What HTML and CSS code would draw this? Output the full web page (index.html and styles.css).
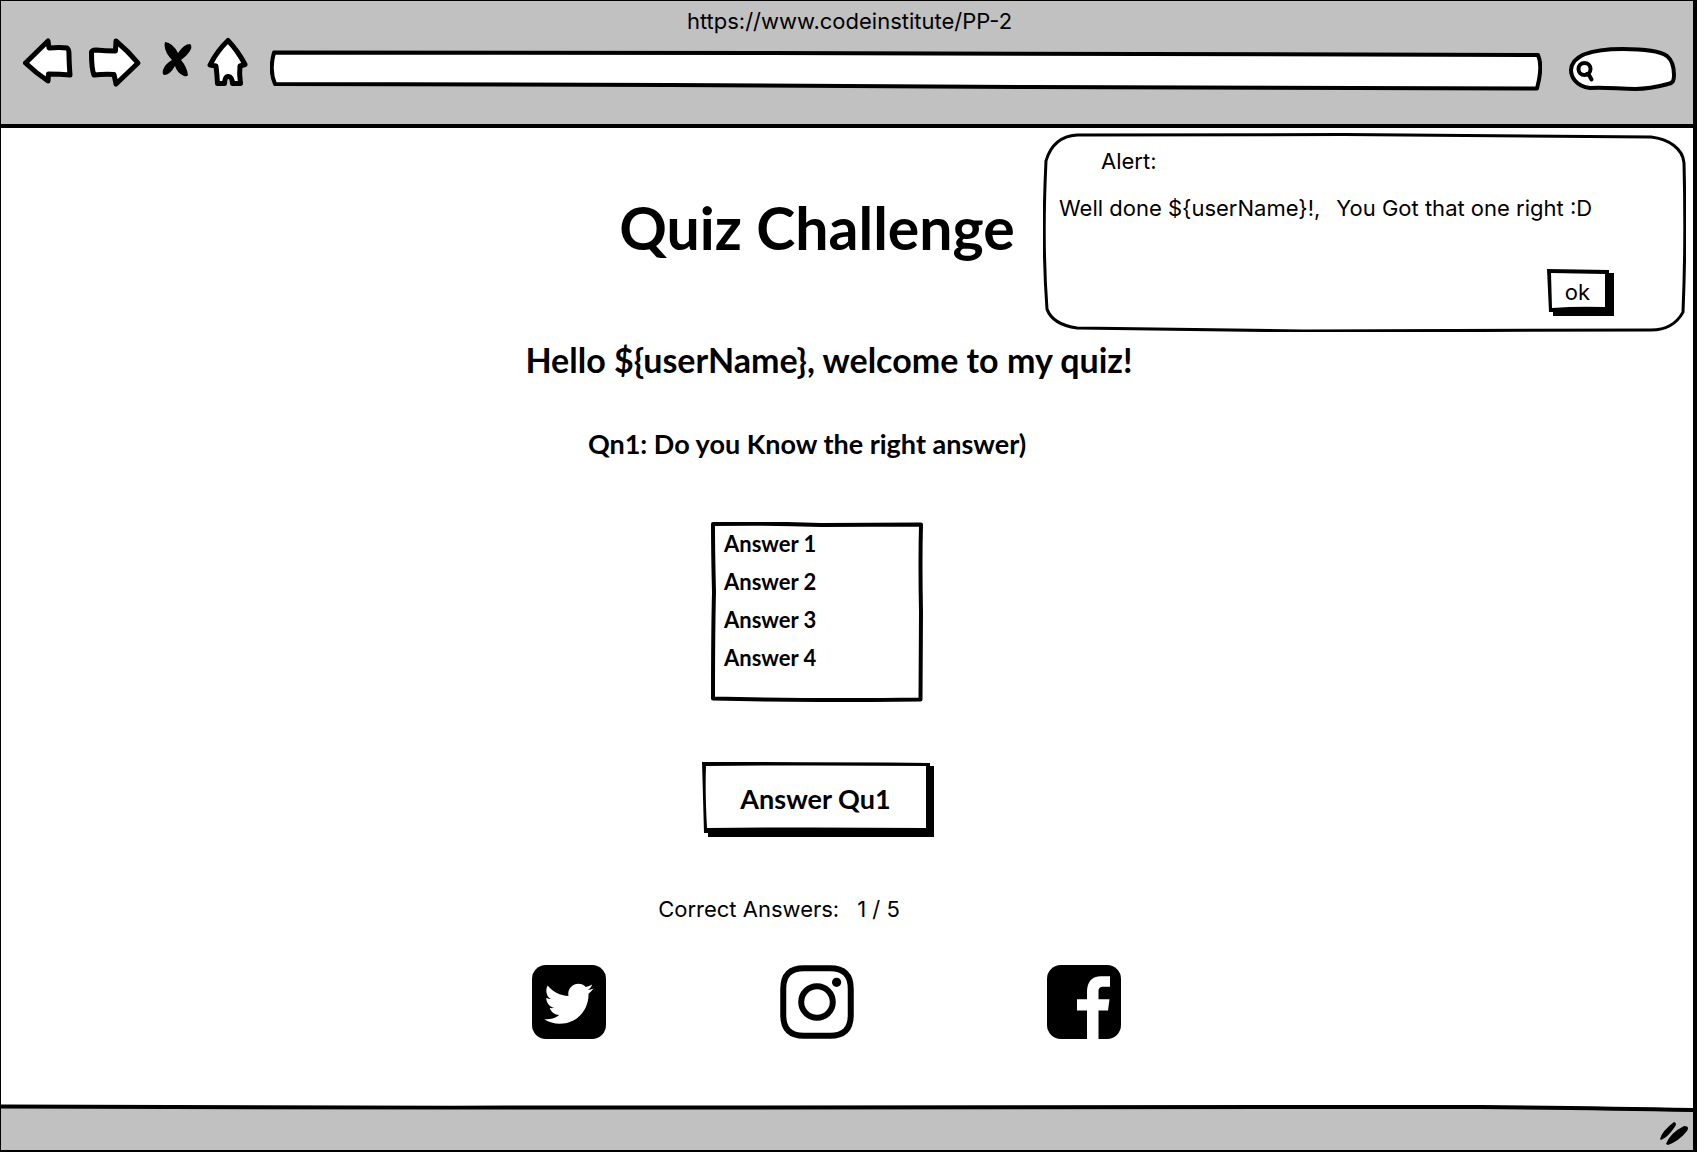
FILE: index.html
```
<!DOCTYPE html>
<html lang="en">
<head>
<meta charset="utf-8">
<meta name="viewport" content="width=device-width, initial-scale=1">
<title>Quiz Challenge</title>
<link rel="stylesheet" href="styles.css">
</head>
<body>
<div class="window">
  <header class="toolbar">
    <p class="address-title">https://www.codeinstitute/PP-2</p>
    <div class="tools">
      <button class="tool" type="button" aria-label="Back">
        <svg class="ink" width="53" height="56" viewBox="23 36 53 56"><path d="M25.500 63L48 41L49 48Q60 47 67 48Q69 49 69 54Q69 62 70 75Q60 74 48.500 74L48 81Q36 73 25.500 63Z"/></svg>
      </button>
      <button class="tool" type="button" aria-label="Forward">
        <svg class="ink" width="56" height="56" viewBox="88 36 56 56"><path d="M91.500 53Q91 50 96 50Q105 51 115.500 51L116 41Q128 51 138 63L116 84L114 74.500Q104 74 94 75Q91.500 69 91.500 53Z"/></svg>
      </button>
      <button class="tool" type="button" aria-label="Stop">
        <svg width="38" height="56" viewBox="156 36 38 56"><path d="M165 42Q173 43 178 53Q184 44 190 44Q192 45 191 49Q188 55 181 60Q187 67 188 75Q187 77 184 76Q177 73 175 66Q170 75 164 75Q162 74 163 70Q165 64 172 60Q165 53 164.500 45Z"/></svg>
      </button>
      <button class="tool" type="button" aria-label="Home">
        <svg class="ink" width="44" height="56" viewBox="206 36 44 56"><path d="M228 40.500Q238 51 245 64.500L240 66Q239 74 240.500 83.500H232.500Q232 76 228 76.500Q225 76 224.500 83.500H217.500Q217 74 216 66L210 65Q217 51 228 40.500Z"/></svg>
      </button>
      <div class="url">
        <svg class="ink outline" viewBox="0 0 1272 42" preserveAspectRatio="none"><path d="M4 2.500L500 3L1268 5Q1273 16 1267 38.500L760 37L400 35L5 34Q-1 20 4 2.500Z"/></svg>
        <input class="field" type="text" aria-label="Address">
      </div>
      <div class="search">
        <svg class="ink outline" viewBox="0 0 107 44"><path d="M21 41C6 39 2 29 2 23C3 7 26 2 54 2C76 2 92 5 98 9C104 14 105 22 105 28C105 34 104 36 99 37C88 40 78 42 66 42C50 42 37 40 21 41Z"/><circle cx="15.500" cy="22" r="6"/><path d="M18 27L20 28L22.500 32.500"/></svg>
        <input class="field" type="search" aria-label="Search">
      </div>
    </div>
  </header>

  <main class="page">
    <h1 class="title">Quiz Challenge</h1>
    <h2 class="greeting">Hello ${userName}, welcome to my quiz!</h2>
    <form class="quiz">
      <label class="question" for="answers">Qn1: Do you Know the right answer)</label>
      <div class="answers">
        <svg class="ink outline" viewBox="0 0 212 180" preserveAspectRatio="none"><path d="M2 2Q60 1 110 3L210 2.500Q209 40 210 90L209.500 177.500Q110 179 2 176.500Q2 110 3 70Q2 30 2 2Z"/></svg>
        <select class="answer-list" id="answers" size="4">
          <option>Answer 1</option>
          <option>Answer 2</option>
          <option>Answer 3</option>
          <option>Answer 4</option>
        </select>
      </div>
      <button class="sketch-button submit" type="button">
        <svg class="outline" viewBox="0 0 232 76"><path d="M5 8H232V75H6V71H2L0 0Q110 0 228 1V4H232V20H5Z"/><path class="paper" d="M4 4Q110 3 224 4V66Q110 65 5 66Q3 30 4 4Z"/></svg>
        <span class="caption">Answer Qu1</span>
      </button>
    </form>
    <p class="score"><span>Correct Answers:</span><span>1 / 5</span></p>
    <nav class="social" aria-label="Social">
      <a href="#twitter" aria-label="Twitter"><svg width="74" height="74" viewBox="0 0 74 74"><rect width="74" height="74" rx="14"/><path class="paper" transform="translate(2.400 -.7) scale(.154)" d="M351.100 190.800c.2 2.800.2 5.700.2 8.500 0 86.700-66 186.600-186.600 186.600-37.200 0-71.700-10.800-100.700-29.400 5.300.6 10.400.8 15.800.8 30.700 0 58.900-10.400 81.400-28-28.800-.6-53-19.500-61.300-45.500 10.100 1.500 19.200 1.500 29.600-1.200-30-6.100-52.500-32.500-52.500-64.400v-.8c8.700 4.900 18.900 7.900 29.600 8.300a65.400 65.400 0 0 1-29.200-54.600c0-12.200 3.200-23.400 8.900-33.100 32.300 39.800 80.800 65.800 135.200 68.600-9.300-44.500 24-80.600 64-80.600 18.900 0 35.900 7.900 47.900 20.700 14.800-2.800 29-8.300 41.600-15.800-4.900 15.200-15.200 28-28.800 36.100 13.200-1.400 26-5.100 37.800-10.200-8.900 13.100-20.100 24.700-32.900 34z"/></svg></a>
      <a href="#instagram" aria-label="Instagram"><svg width="74" height="74" viewBox="0 0 74 74"><path class="ring" d="M24 3.250H50C64 3.250 70.750 10 70.750 24V50C70.750 64 64 70.750 50 70.750H24C10 70.750 3.250 64 3.250 50V24C3.250 10 10 3.250 24 3.250Z"/><circle class="ring" cx="37" cy="37" r="15.800"/><circle cx="56.600" cy="17.300" r="4.600"/></svg></a>
      <a href="#facebook" aria-label="Facebook"><svg width="74" height="74" viewBox="0 0 74 74"><rect width="74" height="74" rx="14"/><path class="paper" d="M40 74V45.600H30V34.300H40V27C40 17 45 11.300 54 11.300H63V21.800H57C53 21.800 51.500 23 51.500 26.500V34.300H62.500L61 45.600H51.500V74Z"/></svg></a>
    </nav>

    <section class="alert" role="alertdialog" aria-labelledby="alert-title">
      <svg class="outline alert-frame" viewBox="0 0 643 200" preserveAspectRatio="none"><path d="M34 2L300 1.500L608 4C626 6 640 16 641 30Q643 110 640 180C634 191 624 198 608 198L260 199L34 196C20 194 8 188 4 177Q-1 110 3 28C8 11 18 3 34 2Z"/></svg>
      <h2 class="alert-title" id="alert-title">Alert:</h2>
      <p class="alert-text"><span>Well done ${userName}!,</span><span>You Got that one right :D</span></p>
      <button class="sketch-button ok" type="button">
        <svg class="outline" viewBox="0 0 67 48"><path d="M0 0L62 1V4H67V47H6V43H2Z"/><path class="paper" d="M4 4L58 5V38Q30 37 5 39Z"/></svg>
        <span class="caption">ok</span>
      </button>
    </section>
  </main>

  <footer class="statusbar">
    <svg class="edge" viewBox="0 0 1692 8" preserveAspectRatio="none"><path class="paper" d="M0 0H1692V6L1480 3H0Z"/><path class="rule" d="M0 2.500Q300 4 600 3.500T1480 3Q1600 4 1692 6"/></svg>
    <svg class="grip" width="28" height="24" viewBox="1660 1122 28 24"><path d="M1660 1139Q1662 1131 1674 1122Q1678 1123 1674 1128Q1668 1137 1661 1140ZM1666 1144Q1670 1133 1684 1126Q1690 1126 1687 1131Q1679 1141 1668 1145Z"/></svg>
  </footer>
</div>
</body>
</html>
```
FILE: styles.css
```
* {
  box-sizing: border-box;
}

body {
  margin: 0;
  background: #fff;
  color: #000;
  font-family: Inter, sans-serif;
  font-size: 22px;
  line-height: 28px;
}

h1, h2, p {
  margin: 0;
}

svg {
  display: block;
}

button {
  border: 0;
  padding: 0;
  background: none;
  color: inherit;
  font: inherit;
  cursor: pointer;
}

.window {
  display: flex;
  flex-direction: column;
  min-height: 100vh;
  margin-right: 5px;
  border: solid #000;
  border-width: 1px 4px 2px 1px;
}

/* Hand-drawn outlines */
.ink {
  fill: #fff;
  stroke: #000;
  stroke-width: 5px;
  stroke-linejoin: round;
  stroke-linecap: round;
}

.outline {
  position: absolute;
  inset: 0;
  width: 100%;
  height: 100%;
}

.outline path {
  vector-effect: non-scaling-stroke;
}

.paper {
  fill: #fff;
}

/* Browser bar */
.toolbar {
  height: 127px;
  padding: 6px 17px 0 22px;
  border-bottom: 4px solid #000;
  background: #c1c1c1;
}

.address-title {
  text-align: center;
}

.tools {
  display: flex;
  align-items: flex-start;
  gap: 12px;
  padding-top: 1px;
}

.url {
  position: relative;
  flex: 1;
  height: 42px;
  margin: 14px 15px 0 8px;
}

.search {
  position: relative;
  width: 107px;
  height: 44px;
  margin-top: 11px;
}

.url .ink,
.search .ink,
.answers .ink {
  stroke-width: 4px;
}

.field {
  position: relative;
  width: 100%;
  height: 100%;
  padding: 0 12px;
  border: 0;
  outline: 0;
  background: none;
  font: inherit;
}

.search .field {
  padding-left: 28px;
}

/* Quiz */
.page {
  position: relative;
  display: flex;
  flex: 1;
  flex-direction: column;
  align-items: center;
  padding: 64px 60px 64px 0;
}

.title,
.greeting,
.quiz {
  font-family: Lato, sans-serif;
  font-weight: 700;
}

.title {
  font-size: 59px;
  line-height: 72px;
}

.greeting {
  margin: 76px 0 48px 24px;
  font-size: 34px;
  line-height: 40px;
}

.quiz {
  display: flex;
  flex-direction: column;
  align-items: center;
}

.question {
  margin-right: 20px;
  font-size: 27px;
  line-height: 32px;
}

.answers {
  position: relative;
  width: 212px;
  height: 180px;
  margin: 62px 0 60px;
}

.answer-list {
  position: relative;
  width: 100%;
  height: 100%;
  padding: 8px 8px 0;
  border: 0;
  outline: 0;
  overflow: hidden;
  background: none;
  color: inherit;
  font: inherit;
  font-size: 22px;
}

.answer-list option {
  min-height: 38px;
  padding: 0 5px;
  font-weight: 700;
  line-height: 38px;
}

.sketch-button {
  position: relative;
}

.caption {
  position: relative;
}

.submit {
  width: 232px;
  height: 76px;
  margin-left: 3px;
  padding: 0 6px 2px 0;
  font-size: 27px;
}

.score {
  display: flex;
  gap: 18px;
  margin: 57px 76px 42px 0;
}

.social {
  display: grid;
  grid-template-columns: 248px 267px 74px;
  margin-left: 18px;
}

.social a {
  width: 74px;
  color: inherit;
}

.ring {
  fill: none;
  stroke: #000;
  stroke-width: 6px;
}

/* Alert box */
.alert {
  position: absolute;
  top: 5px;
  right: 7px;
  display: flex;
  flex-direction: column;
  width: 643px;
  padding: 14px 72px 15px 16px;
}

.alert-frame {
  fill: #fff;
  stroke: #000;
  stroke-width: 3px;
}

.alert-title,
.alert-text {
  position: relative;
  font-size: 22px;
  font-weight: 400;
}

.alert-title {
  padding-left: 42px;
}

.alert-text {
  display: flex;
  gap: 16px;
  margin: 19px 0 47px;
  white-space: nowrap;
}

.ok {
  align-self: flex-end;
  width: 67px;
  height: 48px;
  padding: 0 6px 2px 0;
}

/* Bottom bar */
.statusbar {
  display: flex;
  flex-direction: column;
  height: 46px;
  background: #c1c1c1;
}

.edge {
  width: 100%;
  height: 8px;
}

.rule {
  fill: none;
  stroke: #000;
  stroke-width: 4px;
}

.grip {
  align-self: flex-end;
  margin: 10px 5px 0 0;
}
```
